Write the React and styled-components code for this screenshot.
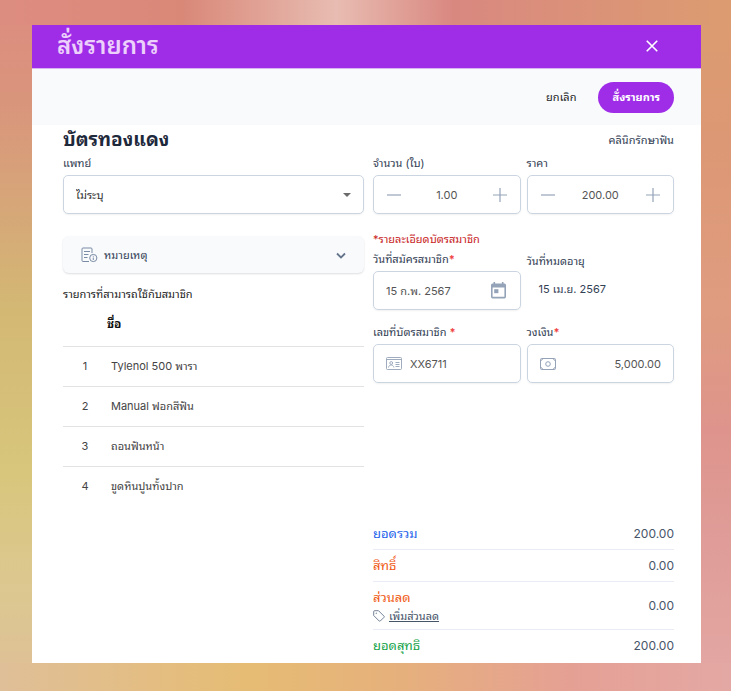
import React, { useState } from 'react';
import styled, { createGlobalStyle, css } from 'styled-components';

const GlobalStyle = createGlobalStyle`
  * {
    box-sizing: border-box;
  }
  body {
    margin: 0;
    font-family: Inter, "Noto Sans Thai Looped", Loma, Waree, Garuda, "DejaVu Sans", sans-serif;
    font-size: 11px;
    line-height: 16px;
    color: #334155;
  }
  button, input, select {
    font-family: inherit;
    font-size: inherit;
    line-height: inherit;
    color: inherit;
  }
`;

const Backdrop = styled.div`
  display: flex;
  min-height: 100vh;
  padding: 25px 30px 28px 32px;
  background:
    linear-gradient(90deg, #dd8c80, #d98878 25%, #e8bcb2 46%, #d98880 62%, #dc9c70) top / 100% 25px no-repeat,
    linear-gradient(90deg, #dfbf98, #e6bc74 34%, #e6b07c 55%, #e5a094 78%, #e4a8a4) bottom / 100% 28px no-repeat,
    linear-gradient(#dd8c80, #d9957c 15%, #d3b874 45%, #d8c67c 68%, #dcc890 85%, #dfbf98) left / 32px 100% no-repeat,
    linear-gradient(#dc9c70, #dc9874 20%, #df9c80 45%, #de948c 62%, #df9c98 78%, #e4a8a4) right / 30px 100% no-repeat;
`;

const Modal = styled.section`
  flex: 1;
  display: flex;
  flex-direction: column;
  background: #fff;
`;

const Header = styled.header`
  display: flex;
  align-items: center;
  justify-content: space-between;
  height: 44px;
  padding: 0 42px 2px 25px;
  background: #9f2de8;
  border-bottom: 1px solid #d8b4f0;
`;

const Title = styled.h1`
  margin: 0;
  font-size: 24px;
  line-height: 40px;
  font-weight: 600;
  color: #ecd0fb;
`;

const IconButton = styled.button`
  display: flex;
  padding: 0;
  border: 0;
  background: none;
  color: ${(props) => props.$color || '#94a3b8'};
  cursor: pointer;
`;

const Actions = styled.div`
  display: flex;
  align-items: center;
  justify-content: flex-end;
  gap: 8px;
  height: 56px;
  padding: 0 27px;
  background: #f8fafc;
`;

const ActionButton = styled.button`
  height: 31px;
  padding: 0 14px;
  border: 0;
  border-radius: 16px;
  background: ${(props) => (props.$primary ? '#9f2de8' : 'transparent')};
  color: ${(props) => (props.$primary ? '#fff' : '#1e1e1e')};
  font-weight: ${(props) => (props.$primary ? 700 : 400)};
  cursor: pointer;
`;

const Body = styled.div`
  flex: 1;
  display: flex;
  flex-direction: column;
  padding: 0 27px 0 31px;
`;

const BodyHead = styled.div`
  display: flex;
  align-items: center;
  justify-content: space-between;
  height: 30px;
`;

const Heading = styled.h2`
  margin: 0;
  font-size: 19px;
  line-height: 28px;
  font-weight: 700;
  color: #1e293b;
`;

const Columns = styled.div`
  flex: 1;
  display: grid;
  grid-template-columns: 1fr 1fr;
  gap: 9px;
`;

const Column = styled.div`
  display: flex;
  flex-direction: column;
`;

const Pair = styled.div`
  display: grid;
  grid-template-columns: 1fr 1fr;
  gap: 14px 6px;
`;

const Field = styled.div`
  display: flex;
  flex-direction: column;
  gap: 4px;
`;

const labelStyle = css`
  color: #334155;
  line-height: 16px;
`;

const Label = styled.label`
  ${labelStyle}
`;

const Caption = styled.span`
  ${labelStyle}
`;

const Required = styled.span`
  color: #ef4444;
  font-weight: 700;
`;

const Control = styled.div`
  display: flex;
  align-items: center;
  gap: 8px;
  height: 39px;
  padding: 0 12px;
  border: 1px solid #cbd5e1;
  border-radius: 5px;
  box-shadow: 0 1px 2px rgba(15, 23, 42, 0.06);
  color: #94a3b8;
`;

const Input = styled.input`
  flex: 1;
  min-width: 0;
  width: 100%;
  padding: 0;
  border: 0;
  outline: 0;
  background: none;
  color: #555;
  text-align: ${(props) => props.$align || 'left'};
`;

const Select = styled.select`
  flex: 1;
  border: 0;
  outline: 0;
  appearance: none;
  background: none;
  color: #333;
`;

const Expiry = styled(Field)`
  padding-top: 2px;
`;

const PlainDate = styled.span`
  padding: 8px 12px;
`;

const Note = styled.button`
  display: flex;
  align-items: center;
  gap: 6px;
  height: 37px;
  margin: 22px 0 13px;
  padding: 0 17px 0 18px;
  border: 0;
  border-radius: 6px;
  background: #f8fafc;
  box-shadow: 0 1px 2px rgba(15, 23, 42, 0.14);
  text-align: left;
  cursor: pointer;
`;

const NoteLabel = styled.span`
  flex: 1;
`;

const Table = styled.table`
  width: 100%;
  border-collapse: collapse;
  color: #444;

  caption {
    text-align: left;
    color: #1e1e1e;
  }
  th {
    height: 44px;
    padding: 0;
    text-align: left;
    font-size: 12px;
    color: #111;
  }
  td {
    height: 40px;
    padding: 0 4px;
    border-top: 1px solid #e2e2e2;
  }
  td:first-child {
    width: 44px;
    text-align: center;
  }
`;

const Warning = styled.p`
  margin: 17px 0 4px;
  color: #c81e1e;
`;

const Totals = styled.dl`
  margin: auto 0 0;
`;

const TotalRow = styled.div`
  display: flex;
  align-items: center;
  justify-content: space-between;
  padding: 5px 0;
  border-bottom: 1px solid #e8edf5;
  font-size: 13px;
  line-height: 21px;

  &:last-child {
    border-bottom: 0;
    padding-bottom: 7px;
  }
  dt {
    color: ${(props) => props.$color};
  }
  dd {
    margin: 0;
    font-size: 12px;
    color: #475569;
  }
`;

const DiscountLink = styled.a`
  display: flex;
  align-items: center;
  gap: 4px;
  font-size: 11px;
  line-height: 16px;
  color: #475569;
`;

const CloseIcon = () => (
  <svg width="14" height="14" viewBox="0 0 12 12" stroke="currentColor" strokeWidth="1.400">
    <path d="M1.500 1.500l9 9M10.500 1.500l-9 9" />
  </svg>
);

const MinusIcon = () => (
  <svg width="16" height="16" viewBox="0 0 16 16" stroke="currentColor" strokeWidth="1.200">
    <path d="M1 8h14" />
  </svg>
);

const PlusIcon = () => (
  <svg width="16" height="16" viewBox="0 0 16 16" stroke="currentColor" strokeWidth="1.200">
    <path d="M1 8h14M8 1v14" />
  </svg>
);

const CaretIcon = () => (
  <svg width="8" height="4" viewBox="0 0 8 4" fill="#6b6b6b">
    <path d="M0 0h8L4 4z" />
  </svg>
);

const ChevronIcon = () => (
  <svg width="12" height="12" viewBox="0 0 12 12" fill="none" stroke="#64748b" strokeWidth="1.800">
    <path d="M2 4.500L6 8.500l4-4" />
  </svg>
);

const NoteIcon = () => (
  <svg width="17" height="16" viewBox="0 0 17 16" fill="none" stroke="#7b8ba5" strokeWidth="1">
    <path d="M11 6V2a1 1 0 0 0-1-1H2a1 1 0 0 0-1 1v11.500a1 1 0 0 0 1 1h6M3 4.500h6M3 7.500h4.500M3 10.500h3.500" />
    <circle cx="12.300" cy="11" r="3.600" />
    <path d="M12.300 10.500v2.500M12.300 8.800v.9" />
  </svg>
);

const CalendarIcon = () => (
  <svg width="18" height="17" viewBox="-1 0 18 17" fill="currentColor">
    <path
      fillRule="evenodd"
      d="M2.500 0h1.600v1.600h6.800V0h1.600v1.600h.8A1.600 1.600 0 0 1 15 3.200v11.600a1.600 1.600 0 0 1-1.700 1.600H1.700A1.600 1.600 0 0 1 0 14.800V3.200a1.600 1.600 0 0 1 1.700-1.600h.8zM1.600 5.600v9.200h11.800V5.600z"
    />
    <path d="M3.200 7.200h4.200v4H3.200z" />
  </svg>
);

const CardIcon = () => (
  <svg width="16" height="13" viewBox="0 0 16 13" fill="none" stroke="currentColor" strokeWidth="0.900">
    <rect x="0.500" y="0.500" width="15" height="12" rx="1" />
    <path d="M0.500 2.500h15M9.500 5.500h4M9.500 7.500h4M9.500 9.500h4" />
    <circle cx="5.200" cy="6" r="1.400" />
    <path d="M2.500 10.500c.3-1.700 1.300-2.500 2.700-2.500s2.400.8 2.700 2.500" />
  </svg>
);

const MoneyIcon = () => (
  <svg width="16" height="12" viewBox="0 0 16 12" fill="none" stroke="currentColor" strokeWidth="1">
    <rect x="0.500" y="0.500" width="15" height="11" rx="1" />
    <circle cx="8" cy="6" r="2.300" />
    <path d="M.5 2.500a2 2 0 0 0 2-2M13.500.5a2 2 0 0 0 2 2M.5 9.500a2 2 0 0 1 2 2M13.500 11.500a2 2 0 0 1 2-2" />
  </svg>
);

const TagIcon = () => (
  <svg width="12" height="12" viewBox="0 0 12 12" fill="none" stroke="#64748b" strokeWidth="0.900">
    <path d="M.7 1.700a1 1 0 0 1 1-1h3.800l5.500 5.500a.8.8 0 0 1 0 1.100L7.300 11a.8.8 0 0 1-1.100 0L.7 5.500z" />
    <circle cx="3.200" cy="3.200" r="0.300" />
  </svg>
);

const items = ['Tylenol 500 พารา', 'Manual ฟอกสีฟัน', 'ถอนฟันหน้า', 'ขูดหินปูนทั้งปาก'];

function Stepper({ id, label, initial }) {
  const [value, setValue] = useState(initial);
  const step = (amount) => setValue((Number(value) + amount).toFixed(2));

  return (
    <Field>
      <Label htmlFor={id}>{label}</Label>
      <Control>
        <IconButton type="button" aria-label="ลด" onClick={() => step(-1)}>
          <MinusIcon />
        </IconButton>
        <Input id={id} $align="center" value={value} onChange={(e) => setValue(e.target.value)} />
        <IconButton type="button" aria-label="เพิ่ม" onClick={() => step(1)}>
          <PlusIcon />
        </IconButton>
      </Control>
    </Field>
  );
}

export default function App() {
  return (
    <Backdrop>
      <GlobalStyle />
      <Modal>
        <Header>
          <Title>สั่งรายการ</Title>
          <IconButton type="button" aria-label="ปิด" $color="#fff">
            <CloseIcon />
          </IconButton>
        </Header>
        <Actions>
          <ActionButton type="button">ยกเลิก</ActionButton>
          <ActionButton type="button" $primary>สั่งรายการ</ActionButton>
        </Actions>
        <Body>
          <BodyHead>
            <Heading>บัตรทองแดง</Heading>
            <Caption>คลินิกรักษาฟัน</Caption>
          </BodyHead>
          <Columns>
            <Column>
              <Field>
                <Label htmlFor="doctor">แพทย์</Label>
                <Control>
                  <Select id="doctor">
                    <option>ไม่ระบุ</option>
                  </Select>
                  <CaretIcon />
                </Control>
              </Field>
              <Note type="button">
                <NoteIcon />
                <NoteLabel>หมายเหตุ</NoteLabel>
                <ChevronIcon />
              </Note>
              <Table>
                <caption>รายการที่สามารถใช้กับสมาชิก</caption>
                <thead>
                  <tr>
                    <th />
                    <th>ชื่อ</th>
                  </tr>
                </thead>
                <tbody>
                  {items.map((item, index) => (
                    <tr key={item}>
                      <td>{index + 1}</td>
                      <td>{item}</td>
                    </tr>
                  ))}
                </tbody>
              </Table>
            </Column>
            <Column>
              <Pair>
                <Stepper id="amount" label="จำนวน (ใบ)" initial="1.00" />
                <Stepper id="price" label="ราคา" initial="200.00" />
              </Pair>
              <Warning>*รายละเอียดบัตรสมาชิก</Warning>
              <Pair>
                <Field>
                  <Label htmlFor="start">
                    วันที่สมัครสมาชิก<Required>*</Required>
                  </Label>
                  <Control>
                    <Input id="start" defaultValue="15 ก.พ. 2567" />
                    <IconButton type="button" aria-label="เลือกวันที่">
                      <CalendarIcon />
                    </IconButton>
                  </Control>
                </Field>
                <Expiry>
                  <Caption>วันที่หมดอายุ</Caption>
                  <PlainDate>15 เม.ย. 2567</PlainDate>
                </Expiry>
                <Field>
                  <Label htmlFor="number">
                    เลขที่บัตรสมาชิก <Required>*</Required>
                  </Label>
                  <Control>
                    <CardIcon />
                    <Input id="number" defaultValue="XX6711" />
                  </Control>
                </Field>
                <Field>
                  <Label htmlFor="credit">
                    วงเงิน<Required>*</Required>
                  </Label>
                  <Control>
                    <MoneyIcon />
                    <Input id="credit" $align="right" defaultValue="5,000.00" />
                  </Control>
                </Field>
              </Pair>
              <Totals>
                <TotalRow $color="#2563eb">
                  <dt>ยอดรวม</dt>
                  <dd>200.00</dd>
                </TotalRow>
                <TotalRow $color="#f05a14">
                  <dt>สิทธิ์</dt>
                  <dd>0.00</dd>
                </TotalRow>
                <TotalRow $color="#f05a14">
                  <dt>
                    ส่วนลด
                    <DiscountLink href="#discount">
                      <TagIcon />
                      เพิ่มส่วนลด
                    </DiscountLink>
                  </dt>
                  <dd>0.00</dd>
                </TotalRow>
                <TotalRow $color="#16a34a">
                  <dt>ยอดสุทธิ</dt>
                  <dd>200.00</dd>
                </TotalRow>
              </Totals>
            </Column>
          </Columns>
        </Body>
      </Modal>
    </Backdrop>
  );
}
